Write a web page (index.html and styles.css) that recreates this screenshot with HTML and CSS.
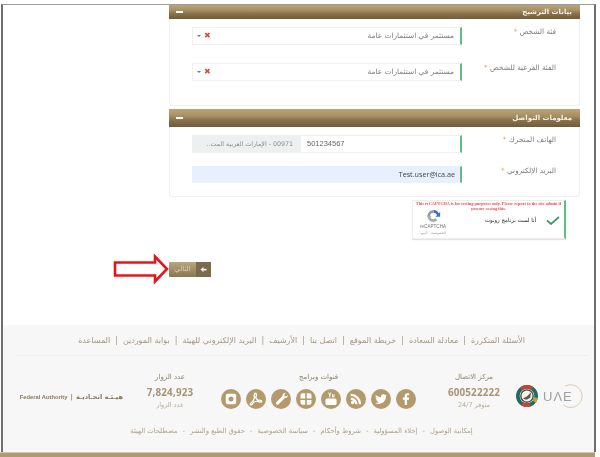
FILE: index.html
```html
<!DOCTYPE html>
<html lang="ar" dir="rtl">
<head>
<meta charset="utf-8">
<title>بيانات الترشيح</title>
<link rel="stylesheet" href="styles.css">
</head>
<body>
<div class="frame">
  <main class="main">
    <section class="panel">
      <header class="panel-head panel-head-cut"><h2>بيانات الترشيح</h2><span class="minus"></span></header>
      <div class="panel-body body-candidate">
        <div class="row">
          <label class="label">فئة الشخص <i>*</i></label>
          <div class="field select"><span>مستثمر في استثمارات عامة</span><b class="clear">✖</b><b class="caret"></b></div>
        </div>
        <div class="row">
          <label class="label">الفئة الفرعية للشخص <i>*</i></label>
          <div class="field select"><span>مستثمر في استثمارات عامة</span><b class="clear">✖</b><b class="caret"></b></div>
        </div>
      </div>
    </section>
    <section class="panel">
      <header class="panel-head"><h2>معلومات التواصل</h2><span class="minus"></span></header>
      <div class="panel-body body-contact">
        <div class="row">
          <label class="label">الهاتف المتحرك <i>*</i></label>
          <div class="field phone"><span class="phone-number">501234567</span><span class="phone-code">00971 - الإمارات العربية المت..</span></div>
        </div>
        <div class="row">
          <label class="label">البريد الإلكتروني <i>*</i></label>
          <div class="field email"><span dir="ltr">Test.user@ica.ae</span></div>
        </div>
      </div>
    </section>
    <div class="captcha">
      <p class="captcha-warn" dir="ltr">This reCAPTCHA is for testing purposes only. Please report to the site admin if you are seeing this.</p>
      <div class="captcha-body">
        <svg class="check" viewBox="0 0 14 9"><path d="M1 4.500 5 8l8-7" fill="none" stroke="#3f9a5c" stroke-width="1.700"/></svg>
        <span class="captcha-text">أنا لست برنامج روبوت</span>
        <div class="captcha-logo">
          <svg class="recaptcha-icon" viewBox="0 0 24 24"><path d="M12 3a9 9 0 0 1 8 5l2-2v7h-7l2.400-2.400A6 6 0 0 0 12 7z" fill="#3b6fc4"/><path d="M3 12a9 9 0 0 1 9-9v4a6 6 0 0 0-5.500 3.500L9 13H2z" fill="#8f9aa6"/><path d="M3 13a9 9 0 0 0 9 8 9 9 0 0 0 6-2.500l-3-3A5 5 0 0 1 7 13z" fill="#a8adb3"/></svg>
          <span class="recaptcha-name" dir="ltr">reCAPTCHA</span>
          <span class="recaptcha-links">الخصوصية - البنود</span>
        </div>
      </div>
    </div>
    <div class="actions">
      <button class="next" type="button">
        <svg class="next-icon" viewBox="0 0 8 8"><path d="M0.500 4 4 1v2h3.500v2H4v2z" fill="#f4efe4"/></svg>
        <span class="next-text">التالي</span>
        <svg class="red-arrow" viewBox="0 0 56 30"><path d="M2 8.500h40V2.500L54 15 42 27.500V21.500H2z" fill="#fff" stroke="#e8141c" stroke-width="2.600"/></svg>
      </button>
    </div>
  </main>
  <footer class="footer">
    <nav class="foot-links">
      <a>الأسئلة المتكررة</a><s>|</s><a>معادلة السعادة</a><s>|</s><a>خريطة الموقع</a><s>|</s><a>اتصل بنا</a><s>|</s><a>الأرشيف</a><s>|</s><a>البريد الإلكتروني للهيئة</a><s>|</s><a>بوابة الموردين</a><s>|</s><a>المساعدة</a>
    </nav>
    <div class="foot-mid">
      <div class="uae" dir="ltr">
        <svg class="emblem" viewBox="0 0 24 24">
          <circle cx="12" cy="12" r="10" fill="none" stroke="#1f6b62" stroke-width="4"/>
          <circle cx="12" cy="12" r="10" fill="none" stroke="#c8443a" stroke-width="4" stroke-dasharray="13 50" transform="rotate(-130 12 12)"/>
          <circle cx="12" cy="12" r="10" fill="none" stroke="#c8443a" stroke-width="4" stroke-dasharray="9 54" transform="rotate(70 12 12)"/>
          <circle cx="12" cy="12" r="10" fill="none" stroke="#c99c3f" stroke-width="4" stroke-dasharray="5 58" transform="rotate(10 12 12)"/>
          <circle cx="12" cy="12" r="7.500" fill="#3b4a44"/>
          <circle cx="12" cy="12" r="6" fill="#f4f1e8"/>
          <path d="M7.500 15l3-2 2-1 4-4-1 6-4 2z" fill="#5a5a50"/>
        </svg>
        <svg class="uae-ring" viewBox="0 0 28 28"><path d="M8 3.500A12.800 12.800 0 1 1 6 24.500" fill="none" stroke="#d6c5a9" stroke-width="1"/></svg>
        <span class="uae-word">UΛE</span>
      </div>
      <div class="stat stat-contact">
        <h3>مركز الاتصال</h3>
        <strong>600522222</strong>
        <small>متوفر 24/7</small>
      </div>
      <div class="channels">
        <h3>قنوات وبرامج</h3>
        <ul class="icons">
          <li><svg viewBox="0 0 20 20"><path d="M11 16v-5.300h1.900l.3-2.100H11V7.300c0-.6.2-1 1-1h1.200V4.400c-.2 0-.9-.1-1.700-.1-1.700 0-2.800 1-2.800 2.800v1.500H6.800v2.100h1.900V16z"/></svg></li>
          <li><svg viewBox="0 0 20 20"><path d="M16 6.400c-.4.200-.9.300-1.400.4.500-.3.900-.8 1.100-1.400-.5.300-1 .5-1.600.6a2.500 2.500 0 0 0-4.200 2.300C7.900 8.200 6.100 7.200 4.900 5.700c-.7 1.100-.3 2.600.8 3.300-.4 0-.8-.1-1.100-.3 0 1.200.9 2.300 2 2.500-.4.100-.8.100-1.100 0 .3 1 1.200 1.700 2.300 1.700-1 .8-2.400 1.200-3.700 1 3.800 2.400 10.900.7 10.900-6.800.5-.2.800-.6 1-1.100z"/></svg></li>
          <li><svg viewBox="0 0 20 20"><circle cx="6.500" cy="13.500" r="1.700"/><path d="M4.800 8.600v2.300a4.300 4.300 0 0 1 4.300 4.300h2.300a6.600 6.600 0 0 0-6.600-6.600z"/><path d="M4.800 4.800v2.300a8.100 8.100 0 0 1 8.100 8.100h2.300A10.400 10.400 0 0 0 4.800 4.800z"/></svg></li>
          <li><svg viewBox="0 0 20 20"><path d="M7.200 3.500h1l.6 2 .6-2h1l-1.100 3v2h-1v-2zM11 5h.9v2.600c.3-.2.500-.3.700-.3V5h.9v3.300h-.9V8c-.3.300-.6.400-.9.400-.5 0-.7-.3-.7-.8z"/><path d="M6 9.500h8a1.600 1.600 0 0 1 1.600 1.600v3.300A1.600 1.600 0 0 1 14 16H6a1.600 1.600 0 0 1-1.600-1.600v-3.300A1.600 1.600 0 0 1 6 9.500z"/></svg></li>
          <li><svg viewBox="0 0 20 20"><path d="M4.500 6.300a2 2 0 0 1 2-2h2.700v5.100H4.500zM10.800 4.300h2.700a2 2 0 0 1 2 2v3.100h-4.700zM4.500 11h4.700v4.700H6.500a2 2 0 0 1-2-2zM10.800 11h4.700v2.700a2 2 0 0 1-2 2h-2.700z"/></svg></li>
          <li><svg viewBox="0 0 20 20"><path d="M14.800 3.800c-1.800-.2-3.100 1-3.200 2.500 0 .4 0 .7-.3 1l-6 6a1.500 1.500 0 0 0 2.100 2.100l6-6c.3-.3.700-.3 1-.3 1.500-.1 2.600-1.500 2.500-3.100l-1.800 1.500-1.500-.3-.3-1.500z"/></svg></li>
          <li><svg viewBox="0 0 20 20"><path d="M9.500 4.200c1.300 0 1.100 2.400.3 4.400.5 1.100 1.300 2.100 2.200 2.700 1.500-.2 3.700-.2 3.700 1 0 1.100-2.300.9-4.100-.2-1.300.2-2.700.6-3.900 1-1.100 2-2.200 3-3 2.700-1-.5.100-2.300 2.100-3.300.7-1.300 1.300-2.700 1.800-4-.6-1.600-.6-4.300.9-4.300z" fill="none" stroke="#fff" stroke-width="1.300"/></svg></li>
          <li><svg viewBox="0 0 20 20"><path d="M6.500 4.800h7a1.700 1.700 0 0 1 1.700 1.700v7a1.700 1.700 0 0 1-1.700 1.700h-7a1.700 1.700 0 0 1-1.700-1.700v-7a1.700 1.700 0 0 1 1.700-1.700zm3.500 2.700a2.500 2.500 0 1 0 0 5 2.500 2.500 0 0 0 0-5z"/></svg></li>
        </ul>
      </div>
      <div class="stat stat-visitors">
        <h3>عدد الزوار</h3>
        <strong>7,824,923</strong>
        <small>عدد الزوار</small>
      </div>
      <div class="authority">
        <span class="auth-ar">هيـئـة اتحـاديـة</span>
        <span class="auth-sep">|</span>
        <span class="auth-en" dir="ltr">Federal Authority</span>
      </div>
    </div>
    <nav class="foot-legal">
      <a>إمكانية الوصول</a><s>-</s><a>إخلاء المسؤولية</a><s>-</s><a>شروط وأحكام</a><s>-</s><a>سياسة الخصوصية</a><s>-</s><a>حقوق الطبع والنشر</a><s>-</s><a>مصطلحات الهيئة</a>
    </nav>
  </footer>
</div>
<div class="gold-bar"></div>
</body>
</html>
```

FILE: styles.css
```css
* { box-sizing: border-box; }
html, body { margin: 0; padding: 0; }
body {
  width: 600px;
  height: 457px;
  overflow: hidden;
  background: #fff;
  font-family: "DejaVu Sans", "Noto Sans", sans-serif;
  filter: blur(0.5px);
}
.frame {
  width: 595px;
  height: 448px;
  margin: 4px 4px 0 1px;
  border: solid #6f6f6f;
  border-width: 1px 2px 0;
  border-top-color: #9a9a9a;
  display: flex;
  flex-direction: column;
}
.main {
  flex: 1;
  padding-right: 14px;
  display: flex;
  flex-direction: column;
  align-items: flex-start;
}
.panel { width: 411px; margin-bottom: 3px; }
.panel-head {
  height: 18px;
  display: flex;
  align-items: center;
  justify-content: space-between;
  padding: 0 8px 0 7px;
  color: #fff;
  background: linear-gradient(#bda57a 0%, #a68d62 40%, #8a7450 60%, #6f5b3a 100%);
}
.panel-head-cut { height: 14px; }
.panel-head h2 { margin: 0; font-size: 7px; font-weight: 700; color: #f6f1e6; }
.minus { width: 7px; height: 2px; background: #fff; }
.panel-body {
  border: 1px solid #f0f0f0;
  border-top: 0;
  border-radius: 0 0 3px 3px;
  padding: 8px 23px 0;
  display: flex;
  flex-direction: column;
}
.body-candidate { height: 87px; gap: 18.500px; }
.body-contact { height: 70px; gap: 13px; }
.row { display: grid; grid-template-columns: 94px 270px; align-items: start; }
.label { font-size: 7.300px; color: #7d7d7d; white-space: nowrap; }
.label i { color: #d9a05e; font-style: normal; }
.field {
  height: 17.500px;
  border: 1px solid #efefef;
  border-right: 2px solid #5fbf80;
  font-size: 7.400px;
  color: #7c7c7c;
  display: flex;
  align-items: center;
}
.select { padding: 0 6px 0 4px; background: #fff; }
.select span { margin-left: auto; }
.clear { font-size: 8px; color: #d84a3c; margin-left: 3px; font-weight: 700; }
.caret { width: 0; height: 0; border: 2px solid transparent; border-top: 2.500px solid #777; margin-top: 2px; }
.phone { background: #fff; }
.phone-number { flex: none; width: 159px; padding-left: 6px; color: #666; direction: ltr; font: 7.500px "Liberation Sans", sans-serif; }
.phone-code { flex: 1; min-width: 0; overflow: hidden; height: 100%; background: #eef0f0; display: flex; align-items: center; padding: 0 8px; white-space: nowrap; color: #8a8a8a; font-size: 6.300px; }
.email { background: #e8f0fe; padding-right: 5px; color: #444; border-color: #e8f0fe; border-right-color: #5fbf80; font: 7.200px "Open Sans", sans-serif; }
.captcha {
  width: 154px;
  height: 39px;
  margin: 0 14px 0 0;
  border: 1px solid #eeeeee;
  border-right: 2px solid #5fbf80;
  background: #fff;
  box-shadow: 0 1px 1px #e4e4e4;
}
.captcha-warn {
  margin: 0;
  font: 700 4.300px/5px "Liberation Serif", serif;
  color: #ef4a4a;
  text-align: center;
  height: 10px;
}
.captcha-body { display: flex; align-items: center; padding-right: 4px; height: 27px; }
.check { width: 14px; height: 9px; flex: none; margin-bottom: 9px; }
.captcha-text { font-size: 5.500px; color: #222; margin: 0 10px 9px 0; white-space: nowrap; }
.captcha-logo { margin: -6px auto 0 0; width: 40px; display: flex; flex-direction: column; align-items: center; }
.recaptcha-icon { width: 17px; height: 16px; }
.recaptcha-name { font: 4.600px/6px "Liberation Sans", sans-serif; color: #777; }
.recaptcha-links { font-size: 3.500px; line-height: 6px; color: #999; }
.actions { width: 411px; margin-top: 23px; display: flex; justify-content: flex-end; }
.next {
  position: relative;
  width: 42px;
  height: 15px;
  padding: 0;
  border: 0;
  border-radius: 1px;
  display: flex;
  align-items: stretch;
  background: linear-gradient(#b8a681, #8a7650);
  font-family: inherit;
}
.next-icon { width: 15px; height: 15px; padding: 4px; background: #7a6a4e; }
.next-text { flex: 1; font-size: 7px; line-height: 14px; color: #d9cfba; text-align: center; }
.red-arrow { position: absolute; top: -8px; right: 100%; width: 56px; height: 30px; }
.footer {
  flex: none;
  height: 127px;
  background: #f7f7f7;
  padding: 0 6px 0 12px;
  color: #a4977f;
}
.footer a { text-decoration: none; }
.footer s { text-decoration: none; margin: 0 5px; }
.foot-links {
  height: 31px;
  border-bottom: 1px solid #eeeeee;
  display: flex;
  justify-content: center;
  align-items: center;
  font-size: 8px;
  white-space: nowrap;
}
.foot-mid { height: 60px; display: flex; align-items: flex-start; }
.uae { position: relative; width: 73px; height: 30px; margin-top: 25px; flex: none; display: flex; align-items: center; padding-left: 1px; }
.emblem { width: 22px; height: 22px; flex: none; }
.uae-ring { position: absolute; left: 43px; top: 2px; width: 25px; height: 25px; }
.uae-word { margin-left: 5px; font: 13px/1 "Liberation Sans", sans-serif; color: #a2a2a2; letter-spacing: 1px; }
.stat { flex: none; display: flex; flex-direction: column; align-items: center; padding-top: 16px; }
.stat-contact { width: 82px; }
.stat-visitors { width: 68px; }
.stat h3, .channels h3 { margin: 0; font-size: 7px; line-height: 10px; font-weight: 400; color: #8c8069; }
.stat strong { font-size: 9.800px; line-height: 15px; margin-top: 3px; color: #a89473; font-family: "Open Sans", sans-serif; font-weight: 700; letter-spacing: 0.200px; }
.stat small { font-size: 6.500px; line-height: 10px; color: #b7ac98; }
.channels { width: 229px; flex: none; padding-top: 16px; text-align: center; }
.icons { list-style: none; display: flex; justify-content: center; gap: 5px; margin: 7px 0 0; padding: 0; }
.icons li { width: 20px; height: 20px; border-radius: 50%; background: #b29a6c; }
.icons svg { display: block; width: 20px; height: 20px; fill: #fff; }
.authority { flex: 1; margin-top: 37px; display: flex; align-items: center; justify-content: flex-start; gap: 3px; font-size: 6.600px; font-weight: 700; color: #8b7a5a; white-space: nowrap; padding-right: 13px; }
.auth-en { font-family: "Liberation Sans", sans-serif; font-size: 5.800px; }
.foot-legal {
  height: 29px;
  display: flex;
  justify-content: center;
  align-items: center;
  font-size: 6.800px;
  color: #ad9f88;
  white-space: nowrap;
}
.gold-bar { height: 5px; background: #b09a6f; border-top: 1px solid #d6c7a9; margin-right: 5px; }
```
